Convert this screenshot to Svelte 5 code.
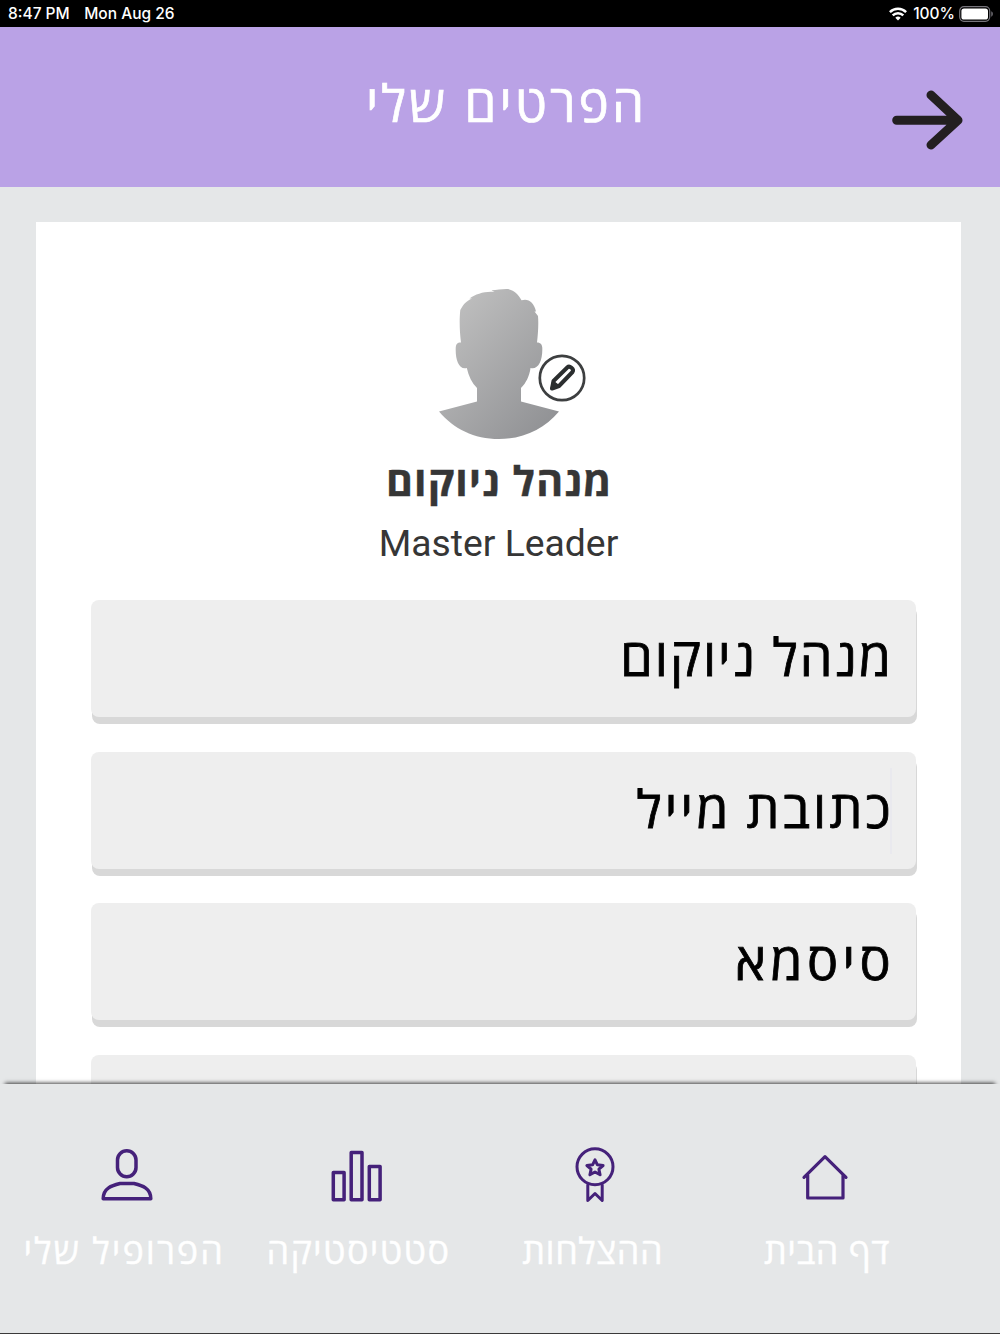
<script>
  let name = $state('מנהל ניוקום');
  let role = $state('Master Leader');

  let fields = $derived([
    { key: 'name', text: name },
    { key: 'email', text: 'כתובת מייל' },
    { key: 'password', text: 'סיסמא' },
    { key: 'phone', text: '' },
  ]);

  const tabs = [
    { key: 'home', label: 'דף הבית' },
    { key: 'awards', label: 'ההצלחות' },
    { key: 'stats', label: 'סטטיסטיקה' },
    { key: 'profile', label: 'הפרופיל שלי' },
  ];
</script>

<div class="screen">
  <div class="status">
    <span class="time">8:47 PM</span>
    <span class="date">Mon Aug 26</span>
    <svg class="wifi" width="18" height="14" viewBox="0 0 18 14" fill="none" stroke="#fff" stroke-width="2.5">
      <path d="M0.9 5.1a11.6 11.6 0 0 1 16.2 0" />
      <path d="M3.7 8.4a7.5 7.5 0 0 1 10.6 0" />
      <path d="M9 13.6l-2.7-2.8a3.9 3.9 0 0 1 5.4 0z" fill="#fff" stroke="none" />
    </svg>
    <span class="percent">100%</span>
    <svg class="battery" width="35" height="16" viewBox="0 0 35 16">
      <rect x="0.7" y="0.7" width="30" height="14.6" rx="4.2" fill="none" stroke="#77757c" stroke-width="1.2" />
      <rect x="2.4" y="2.4" width="26.6" height="11.2" rx="2.6" fill="#fff" />
      <path d="M32.3 5.3c2 .8 2 4.6 0 5.4z" fill="#77757c" />
    </svg>
  </div>

  <header>
    <h1 dir="rtl">הפרטים שלי</h1>
    <button class="back" aria-label="חזרה">
      <svg width="72" height="60" viewBox="0 0 72 60" fill="none" stroke="#231f20" stroke-width="9" stroke-linecap="round" stroke-linejoin="round">
        <path d="M4.7 30.2h61M39 5l27 25.2L39 55" />
      </svg>
    </button>
  </header>

  <main>
    <section class="card">
      <div class="avatar">
        <svg width="122" height="152" viewBox="0 0 122 152">
          <defs>
            <linearGradient id="skin" x1="0.1" y1="0.1" x2="0.9" y2="1">
              <stop offset="0" stop-color="#bfbfbf" />
              <stop offset="1" stop-color="#8f9093" />
            </linearGradient>
          </defs>
          <path
            fill="url(#skin)"
            d="M1 123.5L39 113.500V100C34 95 30.500 88 28.800 80C21 82 17.500 72 17.700 61C17.800 56 19 54.500 23 54.500C21.500 43 21.300 31 22.300 22C25 17 28 13 34 10.500L31.500 10.500C38 6 47 3 56.500 4L53.500 2.300C59 2 65 .7 70 1C76 2.500 80 6 83.500 12.300C90 10 96 14 98 23.500L96.500 23.500L100 28C100.700 36 100 46 99 54.500C103 54.500 104.500 57 104.300 61C104.500 73 100 82 92.500 80C91.500 88 88 95 83 100V113.500L121 123.500C106 141 86 151 61 151C36 151 16 141 1 123.500Z"
          />
        </svg>
        <svg class="edit" width="48" height="48" viewBox="0 0 48 48">
          <circle cx="24" cy="24" r="22.200" fill="#fff" stroke="#3d3f40" stroke-width="2.700" />
          <g fill="none" stroke="#2b2e2f" stroke-width="4" stroke-linejoin="round">
            <path d="M14 34.500l1.500-7.500L29.500 13.300c2-2 7 1.500 5 4.700L21 32z" />
            <path d="M13.500 35l1.500-7.500L21 32z" fill="#2b2e2f" stroke-width="2" />
          </g>
        </svg>
      </div>
      <h2 dir="rtl">{name}</h2>
      <p class="role">{role}</p>

      {#each fields as field (field.key)}
        <div class="field {field.key}" dir="rtl">
          <span>{field.text}</span>
        </div>
      {/each}
    </section>
  </main>

  <nav dir="rtl">
    {#each tabs as tab (tab.key)}
      <a href="#{tab.key}" class="tab-{tab.key}">
        <svg width="60" height="60" viewBox="0 0 60 60" fill="none" stroke="#45217a" stroke-width="3.500" stroke-linejoin="round" stroke-linecap="round">
          {#if tab.key === 'home'}
            <path d="M9 32.300L30 11.700L51 32.300M12.700 30V53H48V30" stroke-width="3.200" />
          {:else if tab.key === 'awards'}
            <circle cx="30" cy="21.800" r="18" stroke-width="3" />
            <path d="M22.800 40v15.500l7.200-7 7.200 7V40" stroke-width="3" />
            <path d="M30 14.800l2.400 5 5.700.7-4.200 3.700 1.200 5.500-5.100-2.700-5.100 2.700 1.200-5.500-4.200-3.700 5.700-.7z" stroke-width="3" />
          {:else if tab.key === 'stats'}
            <path d="M6.300 27.500h10.800v27.200H6.300zM24.200 7.500H35v47.200H24.200zM42.300 21.500h10.800v33.200H42.300z" />
          {:else}
            <rect x="20.500" y="5.800" width="18.500" height="26" rx="9.250" />
            <path d="M6.200 53.700C6.200 43 15 40.500 23 38.500H37C45 40.500 53.800 43 53.800 53.700Z" />
          {/if}
        </svg>
        <span>{tab.label}</span>
      </a>
    {/each}
  </nav>
</div>

<style>
  :global(body) {
    margin: 0;
  }

  .screen {
    width: 1000px;
    height: 1334px;
    display: flex;
    flex-direction: column;
    overflow: hidden;
    box-sizing: border-box;
    border-bottom: 1px solid #3a3a3a;
    background: #e5e7e8;
    font-family: 'Open Sans', 'Liberation Sans', sans-serif;
  }

  .status {
    height: 27px;
    flex: none;
    display: flex;
    align-items: center;
    box-sizing: border-box;
    padding: 0 6px 0 8px;
    background: #000;
    color: #fff;
    font: 500 15.5px Inter, sans-serif;
  }

  .date {
    margin-left: 14.5px;
  }

  .wifi {
    margin-left: auto;
  }

  .percent {
    margin: 0 4px 0 6px;
  }

  header {
    height: 160px;
    flex: none;
    position: relative;
    display: flex;
    justify-content: center;
    background: #baa2e6;
  }

  h1 {
    margin: 0;
    padding-left: 13px;
    color: #fff;
    font-size: 51px;
    font-weight: 400;
    letter-spacing: 3.1px;
    line-height: 151px;
    white-space: nowrap;
    -webkit-text-stroke: 0.7px;
  }

  .back {
    position: absolute;
    right: 36px;
    top: 63px;
    padding: 0;
    border: 0;
    background: none;
  }

  svg {
    display: block;
  }

  main {
    flex: 1;
    min-height: 0;
    overflow: hidden;
    padding: 35px 39px 0 36px;
  }

  .card {
    display: flex;
    flex-direction: column;
    align-items: center;
    padding: 66px 45.5px 0 55px;
    background: #fff;
  }

  .avatar {
    position: relative;
    margin-right: 9.5px;
  }

  .edit {
    position: absolute;
    left: 100.5px;
    top: 66px;
  }

  h2 {
    margin: 10px 8px 0 0;
    color: #363636;
    font-size: 41px;
    font-weight: 700;
    letter-spacing: 1.2px;
    line-height: 60px;
    white-space: nowrap;
    -webkit-text-stroke: 0.4px;
  }

  .role {
    margin: 9px 9.5px 33px 0;
    color: #363636;
    font: 400 37.3px/48px Roboto, sans-serif;
  }

  .field {
    align-self: stretch;
    flex: none;
    box-sizing: border-box;
    height: 117px;
    margin-bottom: 34.6px;
    padding: 0 22.5px;
    border-radius: 8px;
    background: #eee;
    box-shadow: 1px 7px 0 #d8d8d8;
    color: #000;
    font-size: 52px;
    line-height: 112px;
    letter-spacing: 2px;
    -webkit-text-stroke: 0.8px;
  }

  .email {
    padding-right: 21.5px;
    background: linear-gradient(#e9e9ee, #e9e9ee) right 24px top 16px / 2px 86px no-repeat #eee;
    letter-spacing: 3.2px;
    word-spacing: -2px;
  }

  .password {
    padding-right: 20.5px;
    letter-spacing: 4.4px;
    line-height: 114px;
  }

  nav {
    height: 249px;
    flex: none;
    position: relative;
    display: flex;
    box-sizing: border-box;
    padding: 61px 56px 0 7px;
    background: #e5e7e8;
    box-shadow: 0 -6px 4px -5px rgba(0, 0, 0, 0.75);
  }

  nav a {
    flex: 1 1 0;
    min-width: 0;
    display: flex;
    flex-direction: column;
    align-items: center;
    color: #fff;
    font-size: 36px;
    line-height: 50px;
    letter-spacing: 0.5px;
    text-decoration: none;
    white-space: nowrap;
    -webkit-text-stroke: 0.4px;
  }

  nav span {
    margin-top: 20.5px;
  }

  .tab-home svg {
    margin-left: -3px;
  }

  .tab-awards svg {
    margin-left: 4px;
  }

  .tab-stats {
    letter-spacing: 1.3px;
  }

  .tab-stats svg {
    margin-left: -3px;
  }

  .tab-profile {
    letter-spacing: 2px;
  }

  .tab-profile svg {
    margin-left: 5px;
  }
</style>
